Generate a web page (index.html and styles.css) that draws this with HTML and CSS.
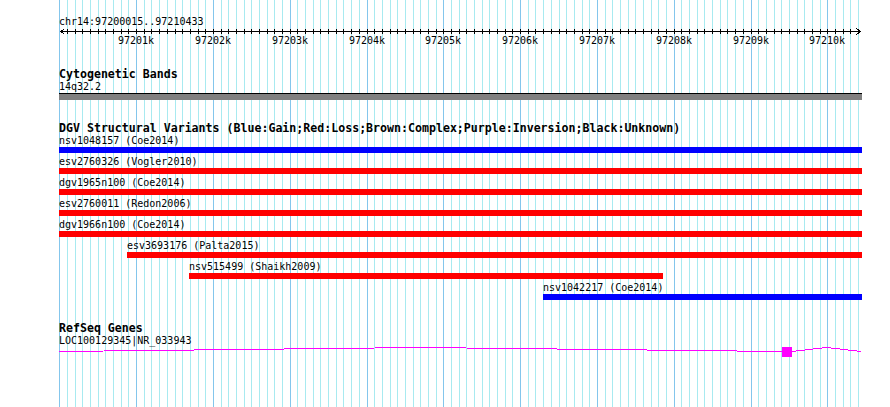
FILE: index.html
```html
<!DOCTYPE html>
<html lang="en">
<head>
    <meta charset="UTF-8">
    <meta name="viewport" content="width=device-width, initial-scale=1.0">
    <title>chr14:97200015..97210433</title>
    <link rel="stylesheet" href="styles.css">
</head>
<body>
<div class="browser">
    <!-- gridlines every 100 bp, darker every 1 kb -->
    <svg class="grid" width="890" height="407">
        <path class="grid-minor" d="M67.5 0v407M75.5 0v407M82.5 0v407M90.5 0v407M98.5 0v407M105.5 0v407M113.5 0v407M121.5 0v407M128.5 0v407
            M144.5 0v407M151.5 0v407M159.5 0v407M167.5 0v407M175.5 0v407M182.5 0v407M190.5 0v407M198.5 0v407M205.5 0v407
            M221.5 0v407M228.5 0v407M236.5 0v407M244.5 0v407M251.5 0v407M259.5 0v407M267.5 0v407M274.5 0v407M282.5 0v407
            M297.5 0v407M305.5 0v407M313.5 0v407M320.5 0v407M328.5 0v407M336.5 0v407M343.5 0v407M351.5 0v407M359.5 0v407
            M374.5 0v407M382.5 0v407M390.5 0v407M397.5 0v407M405.5 0v407M413.5 0v407M420.5 0v407M428.5 0v407M436.5 0v407
            M451.5 0v407M459.5 0v407M466.5 0v407M474.5 0v407M482.5 0v407M489.5 0v407M497.5 0v407M505.5 0v407M512.5 0v407
            M528.5 0v407M535.5 0v407M543.5 0v407M551.5 0v407M559.5 0v407M566.5 0v407M574.5 0v407M582.5 0v407M589.5 0v407
            M605.5 0v407M612.5 0v407M620.5 0v407M628.5 0v407M635.5 0v407M643.5 0v407M651.5 0v407M658.5 0v407M666.5 0v407
            M681.5 0v407M689.5 0v407M697.5 0v407M704.5 0v407M712.5 0v407M720.5 0v407M727.5 0v407M735.5 0v407M743.5 0v407
            M758.5 0v407M766.5 0v407M774.5 0v407M781.5 0v407M789.5 0v407M797.5 0v407M804.5 0v407M812.5 0v407M820.5 0v407
            M835.5 0v407M843.5 0v407M850.5 0v407M858.5 0v407"/>
        <path class="grid-major" d="M59.5 0v407M136.5 0v407M213.5 0v407M290.5 0v407M367.5 0v407M443.5 0v407
            M520.5 0v407M597.5 0v407M674.5 0v407M751.5 0v407M827.5 0v407"/>
    </svg>

    <div class="content">
        <div class="ruler">
            <div class="segment">chr14:97200015..97210433</div>
            <svg class="scale" width="890" height="6">
                <path class="axis" d="M61 3.5H860"/>
                <path class="axis" d="M64.5 0.5L61 3.5L64.5 6.5M856.5 0.5L860 3.5L856.5 6.5"/>
                <path class="axis" d="M67.5 1v5M75.5 1v5M82.5 1v5M90.5 1v5M98.5 1v5M105.5 1v5M113.5 1v5M121.5 1v5M128.5 1v5M136.5 1v5
                    M144.5 1v5M151.5 1v5M159.5 1v5M167.5 1v5M175.5 1v5M182.5 1v5M190.5 1v5M198.5 1v5M205.5 1v5M213.5 1v5
                    M221.5 1v5M228.5 1v5M236.5 1v5M244.5 1v5M251.5 1v5M259.5 1v5M267.5 1v5M274.5 1v5M282.5 1v5M290.5 1v5
                    M297.5 1v5M305.5 1v5M313.5 1v5M320.5 1v5M328.5 1v5M336.5 1v5M343.5 1v5M351.5 1v5M359.5 1v5M367.5 1v5
                    M374.5 1v5M382.5 1v5M390.5 1v5M397.5 1v5M405.5 1v5M413.5 1v5M420.5 1v5M428.5 1v5M436.5 1v5M443.5 1v5
                    M451.5 1v5M459.5 1v5M466.5 1v5M474.5 1v5M482.5 1v5M489.5 1v5M497.5 1v5M505.5 1v5M512.5 1v5M520.5 1v5
                    M528.5 1v5M535.5 1v5M543.5 1v5M551.5 1v5M559.5 1v5M566.5 1v5M574.5 1v5M582.5 1v5M589.5 1v5M597.5 1v5
                    M605.5 1v5M612.5 1v5M620.5 1v5M628.5 1v5M635.5 1v5M643.5 1v5M651.5 1v5M658.5 1v5M666.5 1v5M674.5 1v5
                    M681.5 1v5M689.5 1v5M697.5 1v5M704.5 1v5M712.5 1v5M720.5 1v5M727.5 1v5M735.5 1v5M743.5 1v5M751.5 1v5
                    M758.5 1v5M766.5 1v5M774.5 1v5M781.5 1v5M789.5 1v5M797.5 1v5M804.5 1v5M812.5 1v5M820.5 1v5M827.5 1v5
                    M835.5 1v5M843.5 1v5M850.5 1v5M858.5 1v5"/>
            </svg>
            <div class="scale-labels">
                <span style="left:118px">97201k</span>
                <span style="left:195px">97202k</span>
                <span style="left:272px">97203k</span>
                <span style="left:349px">97204k</span>
                <span style="left:425px">97205k</span>
                <span style="left:502px">97206k</span>
                <span style="left:579px">97207k</span>
                <span style="left:656px">97208k</span>
                <span style="left:733px">97209k</span>
                <span style="left:809px">97210k</span>
            </div>
        </div>

        <section class="track cyto">
            <h2 class="track-title">Cytogenetic Bands</h2>
            <div class="feature-label">14q32.2</div>
            <div class="band"></div>
        </section>

        <section class="track dgv">
            <h2 class="track-title">DGV Structural Variants (Blue:Gain;Red:Loss;Brown:Complex;Purple:Inversion;Black:Unknown)</h2>
            <ul class="variants">
                <li class="variant">
                    <span class="label">nsv1048157 (Coe2014)</span>
                    <div class="bar gain" style="width:803px"></div>
                </li>
                <li class="variant">
                    <span class="label">esv2760326 (Vogler2010)</span>
                    <div class="bar loss" style="width:803px"></div>
                </li>
                <li class="variant">
                    <span class="label">dgv1965n100 (Coe2014)</span>
                    <div class="bar loss" style="width:803px"></div>
                </li>
                <li class="variant">
                    <span class="label">esv2760011 (Redon2006)</span>
                    <div class="bar loss" style="width:803px"></div>
                </li>
                <li class="variant">
                    <span class="label">dgv1966n100 (Coe2014)</span>
                    <div class="bar loss" style="width:803px"></div>
                </li>
                <li class="variant" style="margin-left:68px">
                    <span class="label">esv3693176 (Palta2015)</span>
                    <div class="bar loss" style="width:735px"></div>
                </li>
                <li class="variant" style="margin-left:130px">
                    <span class="label">nsv515499 (Shaikh2009)</span>
                    <div class="bar loss" style="width:474px"></div>
                </li>
                <li class="variant" style="margin-left:484px">
                    <span class="label">nsv1042217 (Coe2014)</span>
                    <div class="bar gain" style="width:319px"></div>
                </li>
            </ul>
        </section>

        <section class="track genes">
            <h2 class="track-title">RefSeq Genes</h2>
            <div class="feature-label">LOC100129345|NR_033943</div>
            <svg class="gene-model" width="890" height="10">
                <polyline class="intron" points="59,4.5 420.5,0.5 782,4.5"/>
                <rect class="exon" x="782" y="0" width="10" height="10"/>
                <polyline class="intron" points="792,4.5 826.5,0.5 861,4.5"/>
            </svg>
        </section>
    </div>
</div>
</body>
</html>
```

FILE: styles.css
```css
/* base */
body {
    margin: 0;
    background: #fff;
}

.browser {
    position: relative;
    width: 890px;
    height: 407px;
    overflow: hidden;
    font-family: "DejaVu Sans Mono", monospace;
    font-size: 10px;
    line-height: 13px;
    color: #000;
}

/* gridlines */
.grid {
    position: absolute;
    top: 0;
    left: 0;
    shape-rendering: crispEdges;
}

.grid-minor {
    stroke: #a8eaf0;
}

.grid-major {
    stroke: #84c6ec;
}

.content {
    position: relative;
    padding-top: 15px;
}

/* ruler */
.segment {
    padding-left: 59px;
}

.scale {
    display: block;
    overflow: visible;
    shape-rendering: crispEdges;
}

.axis {
    stroke: #000;
    fill: none;
}

.scale-labels {
    position: relative;
    height: 13px;
}

.scale-labels span {
    position: absolute;
    top: 0;
}

/* tracks */
.track {
    margin-top: 22px;
}

.cyto {
    margin-top: 21px;
}

.track-title {
    margin: 0;
    padding-left: 59px;
    font-size: 11.6px;
    line-height: 12px;
    font-weight: bold;
    white-space: nowrap;
}

.feature-label {
    padding-left: 59px;
    white-space: nowrap;
}

.band {
    margin-left: 59px;
    width: 803px;
    height: 6px;
    border-top: 1px solid #000;
    background: #808080;
}

/* structural variants */
.variants {
    list-style: none;
    margin: 0;
    padding: 0 0 0 59px;
    display: flex;
    flex-direction: column;
    gap: 2px;
}

.variant .label {
    display: block;
    white-space: nowrap;
}

.bar {
    height: 6px;
}

.gain {
    background: #0000ff;
}

.loss {
    background: #ff0000;
}

/* genes */
.gene-model {
    display: block;
}

.intron {
    fill: none;
    stroke: #ff00ff;
    shape-rendering: crispEdges;
}

.exon {
    fill: #ff00ff;
}
```
